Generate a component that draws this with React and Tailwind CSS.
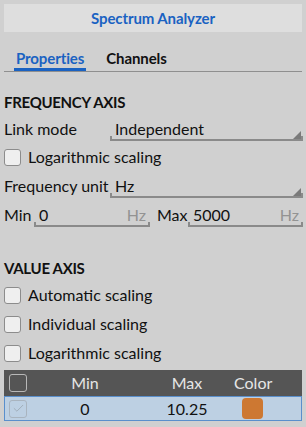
import { Check } from 'lucide-react'

const font = { fontFamily: 'Lato, "Noto Sans", sans-serif' }

function Checkbox({ label, className = '' }) {
  return (
    <label className={`flex items-center h-[20px] gap-[7px] text-[16px] leading-[20px] text-[#111] ${className}`}>
      <span className="w-[17px] h-[17px] rounded-[3px] border border-[#8c8c8c] bg-[#efefef]" />
      <span>{label}</span>
    </label>
  )
}

function Ticks() {
  return (
    <>
      <span className="absolute left-0 bottom-0 w-[2px] h-[3px] bg-[#8a8a8a]" />
      <span className="absolute right-0 bottom-0 w-[2px] h-[3px] bg-[#8a8a8a]" />
    </>
  )
}

function Dropdown({ value }) {
  return (
    <div className="relative flex-1 -mr-[1px] h-[22px] border-b-2 border-[#8a8a8a] pl-[5px] text-[16px] leading-[20px] text-[#111]">
      <Ticks />
      {value}
      <svg className="absolute right-[2px] bottom-0" width="8" height="8" viewBox="0 0 8 8">
        <polygon points="8,0 8,8 0,8" fill="#7a7a7a" />
      </svg>
    </div>
  )
}

function UnitInput({ value, className }) {
  return (
    <div className={`relative h-[22px] flex justify-between border-b-2 border-[#8a8a8a] pl-[5px] pr-[4px] text-[16px] leading-[20px] ${className}`}>
      <Ticks />
      <span className="text-[#111]">{value}</span>
      <span className="text-[#939393]">Hz</span>
    </div>
  )
}

export default function App() {
  return (
    <div className="w-[306px] h-[427px] bg-[#d0d0d0] overflow-hidden px-[4px] pt-[4px] text-[16px] leading-[20px]" style={font}>
      <div className="h-[28px] bg-[#dedede] flex items-center justify-center text-[15px] font-bold tracking-[-0.1px] text-[#1a62c2]">
        Spectrum Analyzer
      </div>

      <div className="h-[40px] flex items-end gap-[20px] border-b border-[#8f8f8f] pl-[10px] text-[15px] font-bold tracking-[-0.1px]">
        <div className="text-[#1a62c2] border-b-[3px] border-[#1a62c2] px-[2px]">Properties</div>
        <div className="text-[#111] pb-[3px]">Channels</div>
      </div>

      <div className="mt-[20px] text-[15px] font-bold tracking-[-0.3px] text-[#111]">FREQUENCY AXIS</div>

      <div className="mt-[7px] flex items-start">
        <span className="w-[106px] text-[#111]">Link mode</span>
        <Dropdown value="Independent" />
      </div>

      <Checkbox label="Logarithmic scaling" className="mt-[6px]" />

      <div className="mt-[9px] flex items-start">
        <span className="w-[106px] text-[#111]">Frequency unit</span>
        <Dropdown value="Hz" />
      </div>

      <div className="mt-[7px] flex items-start">
        <span className="w-[30px] text-[#111]">Min</span>
        <UnitInput value="0" className="w-[116px]" />
        <span className="ml-[7px] w-[31px] text-[#111]">Max</span>
        <UnitInput value="5000" className="flex-1 -mr-[1px]" />
      </div>

      <div className="mt-[31px] text-[15px] font-bold tracking-[-0.3px] text-[#111]">VALUE AXIS</div>
      <Checkbox label="Automatic scaling" className="mt-[7px]" />
      <Checkbox label="Individual scaling" className="mt-[9px]" />
      <Checkbox label="Logarithmic scaling" className="mt-[9px]" />

      <div className="mt-[7px]">
        <div className="h-[26px] bg-[#555555] flex items-center text-[#e6e6e6]">
          <span className="w-[36px] pl-[5px]">
            <span className="block w-[18px] h-[18px] rounded-[3px] border border-[#b8b8b8]" />
          </span>
          <span className="w-[90px] text-center">Min</span>
          <span className="ml-[20px] w-[74px] text-center">Max</span>
          <span className="ml-[10px] w-[36px] text-center">Color</span>
        </div>
        <div className="h-[25px] bg-[#bdd0e3] border border-[#5a8fcc] flex items-center text-[#111]">
          <span className="w-[35px] pl-[4px]">
            <span className="flex w-[18px] h-[18px] rounded-[3px] border border-[#a9b4bf] items-center justify-center">
              <Check size={13} strokeWidth={1.5} color="#9aa6b2" />
            </span>
          </span>
          <span className="w-[90px] text-center">0</span>
          <span className="ml-[20px] w-[74px] text-center">10.25</span>
          <span className="ml-[10px] w-[36px] flex justify-center">
            <span className="w-[21px] h-[21px] rounded-[4px] bg-[#cd7832]" />
          </span>
        </div>
      </div>
    </div>
  )
}
